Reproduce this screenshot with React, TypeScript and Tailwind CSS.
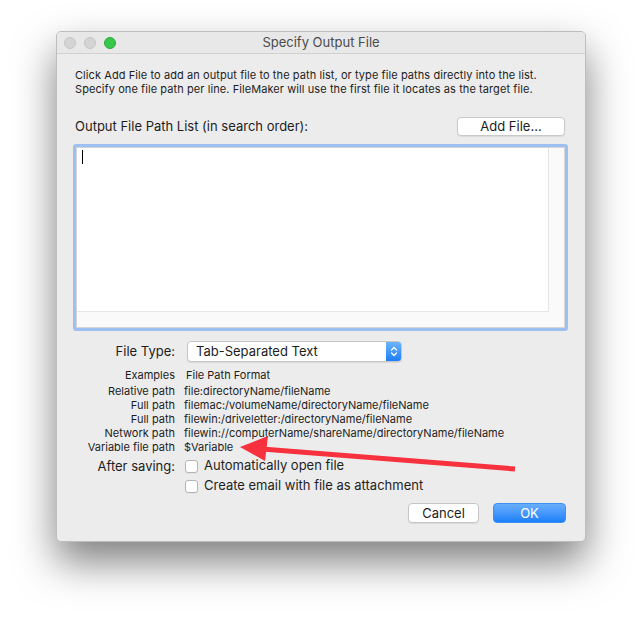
import React from "react";

const examples = [
  { label: "Relative path", value: "file:directoryName/fileName" },
  { label: "Full path", value: "filemac:/volumeName/directoryName/fileName" },
  { label: "Full path", value: "filewin:/driveletter:/directoryName/fileName" },
  { label: "Network path", value: "filewin://computerName/shareName/directoryName/fileName" },
  { label: "Variable file path", value: "$Variable" },
];

function Checkbox({ label }: { label: string }) {
  return (
    <div className="flex items-center h-[20px]">
      <span className="w-[13px] h-[13px] rounded-[3px] bg-white border border-[#b5b5b5] shadow-[0_1px_0_rgba(0,0,0,0.04)]" />
      <span className="ml-[6px] text-[13px] text-[#1f1f1f]">{label}</span>
    </div>
  );
}

export default function App() {
  return (
    <div
      className="relative w-[642px] h-[623px] bg-white overflow-hidden"
      style={{ fontFamily: "Inter, 'Noto Sans', sans-serif" }}
    >
      <div className="ml-[56px] pt-[31px]">
        <div className="w-[530px] h-[511px] rounded-[5px] bg-[#ececec] border border-[#bdbdbd] shadow-[0_20px_40px_rgba(0,0,0,0.5)] flex flex-col overflow-hidden">
          {/* title bar */}
          <div className="relative h-[22px] flex items-center justify-center bg-[#e8e8e8] border-b border-[#d1d1d1]">
            <div className="absolute left-[7px] top-[5px] flex gap-[8px]">
              <span className="w-[12px] h-[12px] rounded-full bg-[#d4d4d4] border border-[#c6c6c6]" />
              <span className="w-[12px] h-[12px] rounded-full bg-[#d4d4d4] border border-[#c6c6c6]" />
              <span className="w-[12px] h-[12px] rounded-full bg-[#35c84a] border border-[#2daa3c]" />
            </div>
            <span className="text-[13px] text-[#4b4b4b]">Specify Output File</span>
          </div>

          {/* description */}
          <div className="mt-[14px] pl-[18px] text-[11px] leading-[14px] text-[#1d1d1d] tracking-[0.08px]">
            <p>Click Add File to add an output file to the path list, or type file paths directly into the list.</p>
            <p>Specify one file path per line. FileMaker will use the first file it locates as the target file.</p>
          </div>

          {/* list label row */}
          <div className="mt-[21px] flex items-center justify-between pl-[18px] pr-[20px] h-[19px]">
            <span className="text-[13px] text-[#1d1d1d]">Output File Path List (in search order):</span>
            <button className="w-[108px] h-[19px] rounded-[4px] bg-white border border-[#c9c9c9] shadow-[0_1px_1px_rgba(0,0,0,0.08)] text-[13px] leading-none text-[#1d1d1d]">
              Add File...
            </button>
          </div>

          {/* path list */}
          <div className="mt-[8px] ml-[16px] w-[495px] h-[187px] rounded-[3px] border-[3px] border-[#9ec0f1]">
            <div className="w-full h-full bg-[#fafafa] border border-[#d6d6d6] grid grid-cols-[1fr_15px] grid-rows-[1fr_15px]">
              <div className="bg-white border-r border-b border-[#e6e6e6] pl-[5px] pt-[2px]">
                <span className="block w-[1px] h-[14px] bg-black" />
              </div>
              <div />
              <div />
              <div />
            </div>
          </div>

          {/* file type */}
          <div className="mt-[10px] flex items-center h-[21px]">
            <span className="w-[118px] text-right text-[13px] text-[#1d1d1d]">File Type:</span>
            <div className="ml-[12px] w-[215px] h-[21px] rounded-[4px] bg-white border border-[#c6c6c6] shadow-[0_1px_1px_rgba(0,0,0,0.08)] flex overflow-hidden">
              <span className="flex-1 pl-[8px] text-[13px] leading-[19px] text-[#1d1d1d]">Tab-Separated Text</span>
              <span className="w-[15px] h-full bg-gradient-to-b from-[#6bb3fb] to-[#1b7efb] flex items-center justify-center">
                <svg width="8" height="13" viewBox="0 0 8 13" fill="none">
                  <path d="M1.5 5 L4 2.5 L6.5 5" stroke="white" strokeWidth="1.2" strokeLinecap="round" strokeLinejoin="round" />
                  <path d="M1.5 8 L4 10.5 L6.5 8" stroke="white" strokeWidth="1.2" strokeLinecap="round" strokeLinejoin="round" />
                </svg>
              </span>
            </div>
          </div>

          {/* examples */}
          <div className="mt-[6px] grid grid-cols-[118px_1fr] gap-x-[9px] text-[11px] leading-[14px] text-[#1d1d1d]">
            <span className="text-right">Examples</span>
            <span className="pl-[2px] mb-[2px]">File Path Format</span>
            {examples.map((ex, i) => (
              <React.Fragment key={i}>
                <span className="text-right">{ex.label}</span>
                <span>{ex.value}</span>
              </React.Fragment>
            ))}
          </div>

          {/* after saving */}
          <div className="mt-[2px] grid grid-cols-[118px_1fr] gap-x-[10px]">
            <span className="text-right text-[13px] leading-[20px] text-[#1d1d1d]">After saving:</span>
            <div className="flex flex-col">
              <Checkbox label="Automatically open file" />
              <Checkbox label="Create email with file as attachment" />
            </div>
          </div>

          {/* buttons */}
          <div className="mt-[7px] flex justify-end gap-[14px] pr-[19px]">
            <button className="w-[71px] h-[20px] rounded-[4px] bg-white border border-[#c6c6c6] shadow-[0_1px_1px_rgba(0,0,0,0.08)] text-[13px] leading-none text-[#1d1d1d]">
              Cancel
            </button>
            <button className="w-[73px] h-[20px] rounded-[4px] bg-gradient-to-b from-[#68affb] to-[#1a7ffb] border border-[#3d8ff5] text-[13px] leading-none text-white">
              OK
            </button>
          </div>
        </div>
      </div>

      {/* red annotation arrow */}
      <svg className="absolute left-0 top-0 pointer-events-none" width="642" height="623" viewBox="0 0 642 623">
        <line x1="515" y1="469" x2="262" y2="449" stroke="#f7323e" strokeWidth="5" />
        <polygon points="240,447 268,436 265,461" fill="#f7323e" />
      </svg>
    </div>
  );
}
